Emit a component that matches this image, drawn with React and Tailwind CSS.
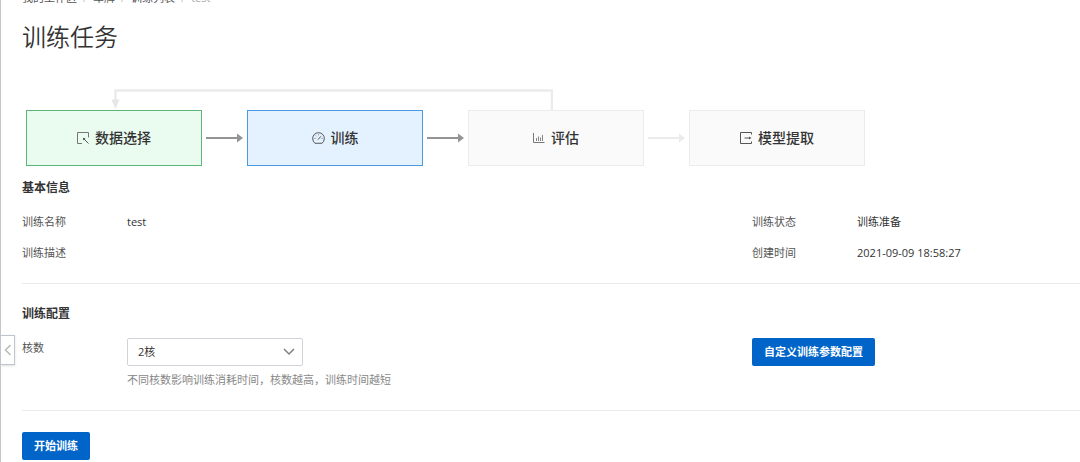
import React, { useState } from 'react';

const SelectIcon = () => (
  <svg viewBox="0 0 12 12" className="w-3 h-3" fill="none" stroke="#777" aria-hidden="true">
    <path d="M11.5 5.5V0.5H0.5V11.5H5" />
    <path d="M11.5 11.5L7 7" stroke="#555" />
    <path d="M6 6H8.6L6 8.6Z" fill="#555" stroke="none" />
  </svg>
);

const GaugeIcon = () => (
  <svg viewBox="0 0 13 12" className="w-[13px] h-3" fill="none" stroke="#555" strokeLinecap="round" aria-hidden="true">
    <path d="M2.6 11A5.9 5.9 0 1 1 10.4 11Z" strokeLinejoin="round" />
    <path d="M6.2 7.4L8.6 4.6" />
    <path d="M2.8 6.4h.4M4 3.8l.2.2M6.5 2.6v.3M9.8 6.4h.4" strokeWidth="0.7" />
  </svg>
);

const ChartIcon = () => (
  <svg viewBox="0 0 12 12" className="w-3 h-3" fill="none" stroke="#777" aria-hidden="true">
    <path d="M0.5 1V10.5H11.5" />
    <path d="M3.5 9V6M5.5 9V4.5M7.5 9V5.5M9.5 9V3" strokeWidth="0.9" />
  </svg>
);

const ExportIcon = () => (
  <svg viewBox="0 0 12 12" className="w-3 h-3" fill="none" stroke="#555" aria-hidden="true">
    <path d="M11.5 2.5V0.5H0.5V11.5H11.5V9.5" />
    <path d="M4.5 6H9.5" />
    <path d="M9 4.4L11.5 6L9 7.6Z" fill="#555" stroke="none" />
  </svg>
);

const steps = [
  { name: '数据选择', icon: SelectIcon, box: 'bg-[#eafbf0] border-[#5cb475]', arrow: '#949494' },
  { name: '训练', icon: GaugeIcon, box: 'bg-[#e4f2ff] border-[#4a9ae0]', arrow: '#949494' },
  { name: '评估', icon: ChartIcon, box: 'bg-[#fafafa] border-[#ececec]', arrow: '#ebebeb' },
  { name: '模型提取', icon: ExportIcon, box: 'bg-[#fafafa] border-[#ececec]' },
];

const Arrow = ({ color }) => (
  <svg viewBox="0 0 37 10" className="w-[37px] h-[10px] mx-1 shrink-0" aria-hidden="true">
    <path d="M0 5H32" stroke={color} strokeWidth="2" />
    <path d="M31 0.5L37 5L31 9.5Z" fill={color} />
  </svg>
);

const StepFlow = () => (
  <div className="pl-1">
    {/* loop back from evaluation to data selection */}
    <svg viewBox="0 0 442 22" className="block w-[442px] h-[22px] ml-[85px]" aria-hidden="true">
      <path d="M4.5 12V2.5H441V22" fill="none" stroke="#ebebeb" strokeWidth="2.5" />
      <path d="M0.5 11.5H8.5L4.5 21Z" fill="#e6e6e6" />
    </svg>
    <ol className="flex items-center">
      {steps.map(({ name, icon: Icon, box, arrow }) => (
        <li key={name} className="flex items-center">
          <div className={`flex items-center justify-center gap-1.5 w-44 h-14 border ${box}`}>
            <Icon />
            <span className="text-sm font-medium">{name}</span>
          </div>
          {arrow && <Arrow color={arrow} />}
        </li>
      ))}
    </ol>
  </div>
);

const Field = ({ label, children }) => (
  <div className="flex h-5">
    <dt className="w-[105px] shrink-0 text-[#555]">{label}</dt>
    <dd>{children}</dd>
  </div>
);

const App = () => {
  const [cores, setCores] = useState('2');

  return (
    <div className="relative min-h-screen overflow-hidden bg-white border-l border-[#c0c6cc] pl-[21px] pb-0.5 text-[11px] leading-5 text-[#333] font-['Open_Sans','Noto_Sans_CJK_SC',sans-serif]">
      <nav aria-label="breadcrumb" className="flex h-4 -mt-2.5 gap-1.5 leading-4 text-[#555]">
        <a href="#workspace">我的工作区</a>
        <span className="text-[#bbb]">/</span>
        <a href="#plate">车牌</a>
        <span className="text-[#bbb]">/</span>
        <a href="#list">训练列表</a>
        <span className="text-[#bbb]">/</span>
        <span className="text-[#aaa]">test</span>
      </nav>

      <h1 className="mt-[15px] mb-[35px] text-2xl leading-8 font-[350]">训练任务</h1>

      <StepFlow />

      <section className="mt-2.5 pb-5 border-b border-[#ebebeb]">
        <h2 className="text-xs leading-6 font-bold">基本信息</h2>
        <dl className="mt-3 grid grid-cols-[69%_1fr] gap-y-[11px]">
          <Field label="训练名称">test</Field>
          <Field label="训练状态">训练准备</Field>
          <Field label="训练描述" />
          <Field label="创建时间">2021-09-09 18:58:27</Field>
        </dl>
      </section>

      <section className="pt-[18px] pb-5 border-b border-[#ebebeb]">
        <h2 className="text-xs leading-6 font-bold">训练配置</h2>
        <div className="mt-3 grid grid-cols-[69%_1fr] items-start">
          <div className="flex">
            <label htmlFor="cores" className="w-[105px] shrink-0 text-[#555]">核数</label>
            <div>
              <div className="relative w-44">
                <select
                  id="cores"
                  value={cores}
                  onChange={(e) => setCores(e.target.value)}
                  className="block w-full h-7 pl-2.5 pr-7 appearance-none bg-white border border-[#d0d4da] rounded-xs"
                >
                  <option value="1">1核</option>
                  <option value="2">2核</option>
                  <option value="4">4核</option>
                </select>
                <svg viewBox="0 0 12 8" className="absolute right-2 top-2.5 w-3 h-2 pointer-events-none" fill="none" stroke="#808080" strokeWidth="1.5" aria-hidden="true">
                  <path d="M1 1L6 6L11 1" />
                </svg>
              </div>
              <p className="mt-1 text-[#888]">不同核数影响训练消耗时间，核数越高，训练时间越短</p>
            </div>
          </div>
          <div>
            <button type="button" className="block h-7 px-3 bg-[#0064c8] text-white font-bold rounded-xs">
              自定义训练参数配置
            </button>
          </div>
        </div>
      </section>

      <button type="button" className="block mt-[21px] h-7 px-3 bg-[#0064c8] text-white font-bold rounded-xs">
        开始训练
      </button>

      {/* side panel toggle */}
      <button
        type="button"
        aria-label="展开侧栏"
        className="absolute left-0 top-[335px] flex items-center justify-center w-3.5 h-[30px] bg-white border border-l-0 border-[#c0c6cc] shadow-sm"
      >
        <svg viewBox="0 0 8 12" className="w-2 h-3" fill="none" stroke="#b4b4b4" strokeWidth="1.3" aria-hidden="true">
          <path d="M6.5 1L1.5 6L6.5 11" />
        </svg>
      </button>
    </div>
  );
};

export default App;
